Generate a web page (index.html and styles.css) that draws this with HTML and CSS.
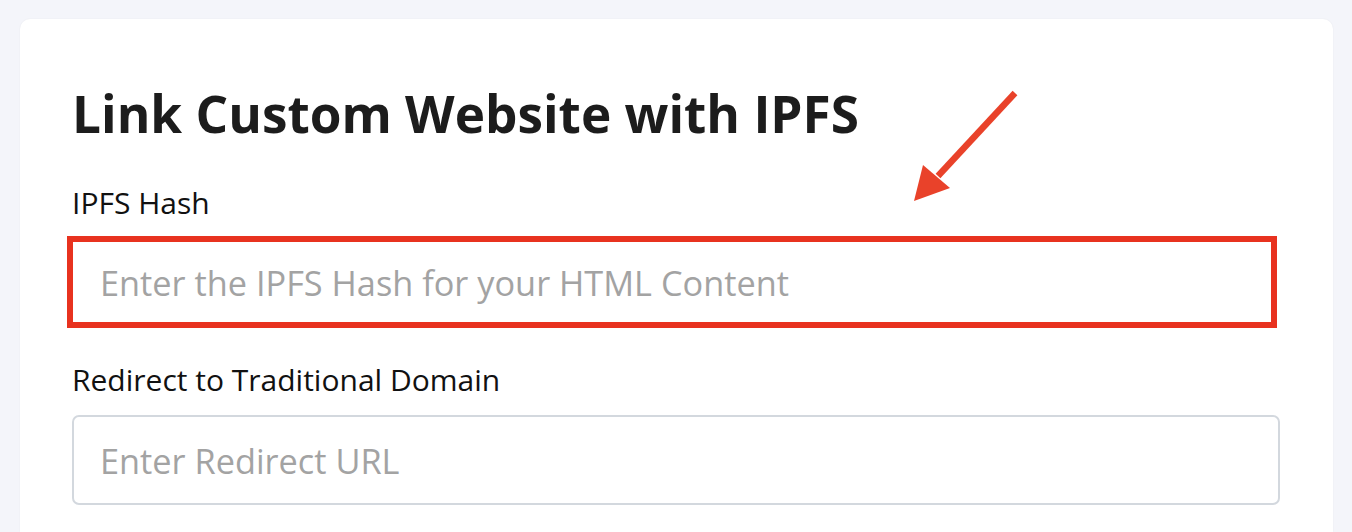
FILE: index.html
```html
<!DOCTYPE html>
<html>
<head>
<meta charset="utf-8">
<link rel="stylesheet" href="styles.css">
</head>
<body>
<div class="page">
  <div class="card">
    <h1 class="title">Link Custom Website with IPFS</h1>
    <div class="field">
      <label class="label">IPFS Hash</label>
      <div class="input input-highlight">Enter the IPFS Hash for your HTML Content</div>
    </div>
    <div class="field">
      <label class="label">Redirect to Traditional Domain</label>
      <div class="input">Enter Redirect URL</div>
    </div>
    <svg class="arrow" width="120" height="130" viewBox="0 0 120 130">
      <line x1="101" y1="11" x2="24" y2="94" stroke="#e9422a" stroke-width="6.5" stroke-linecap="butt"/>
      <polygon points="0,119 9,83 36,106" fill="#e9422a"/>
    </svg>
  </div>
</div>
</body>
</html>
```
FILE: styles.css
```css
html, body {
  margin: 0;
  padding: 0;
  height: 532px;
  overflow: hidden;
  background: #f4f5fa;
}
.page {
  padding: 19px 19px 0 20px;
}
.card {
  position: relative;
  background: #fff;
  border-radius: 10px 10px 0 0;
  box-shadow: 0 0 2px rgba(0,0,0,0.06);
  padding: 64px 52px 0 52px;
  height: 513px;
  box-sizing: border-box;
  overflow: hidden;
  font-family: "Open Sans", sans-serif;
  color: #1e1e1e;
}
.title {
  margin: 0;
  font-size: 51.3px;
  font-weight: 700;
  line-height: 60px;
  color: #1c1c1c;
}
.field {
  display: flex;
  flex-direction: column;
}
.label {
  font-size: 30px;
  font-weight: 500;
  line-height: 36px;
  color: #111;
}
.field:first-of-type .label { margin-top: 42px; }
.field + .field .label { margin-top: 34px; }
.input {
  margin-top: 17px;
  height: 90px;
  border: 2px solid #d3d8de;
  border-radius: 7px;
  box-sizing: border-box;
  display: flex;
  align-items: center;
  padding-left: 26px;
  font-size: 34.3px;
  color: #a3a3a3;
  width: 1208px;
}
.input-highlight {
  border: 6px solid #e8321f;
  border-radius: 0;
  margin-left: -5px;
  padding-left: 27px;
  height: 92px;
  width: 1210px;
  margin-top: 15px;
}
.arrow {
  position: absolute;
  left: 894px;
  top: 63px;
}
```
